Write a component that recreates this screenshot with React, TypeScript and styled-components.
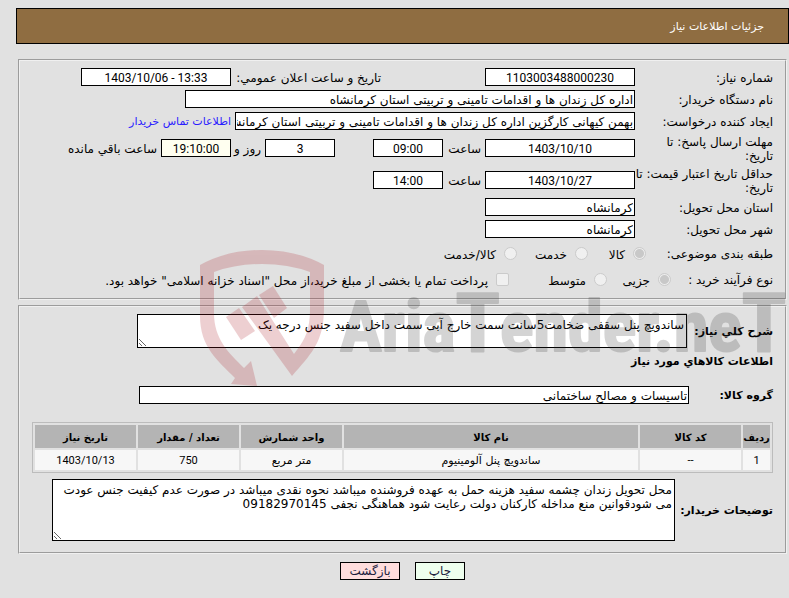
import React from "react";
import styled, { createGlobalStyle } from "styled-components";

const textFont = '"DejaVu Sans", "Noto Sans", sans-serif';
const numberFont = 'Roboto, "DejaVu Sans", sans-serif';

const GlobalStyle = createGlobalStyle`
  * { box-sizing: border-box; }
  body {
    margin: 0;
    background: #e1e1e1;
    color: #000;
    font-family: ${textFont};
    font-size: 12px;
    line-height: 14px;
  }
`;

const Page = styled.main`
  position: relative;
  direction: rtl;
  padding: 8px 0 16px 16px;
  overflow: hidden;
`;

const TitleBar = styled.header`
  display: flex;
  align-items: center;
  height: 36px;
  margin-bottom: 15px;
  padding: 2px 24px 0;
  border: 1px solid #000;
  background: #8f6d41;
`;

const Title = styled.h1`
  margin: 0;
  color: #fff;
  font-size: 11px;
  font-weight: 400;
`;

const Panel = styled.section<{ $top: number; $bottom: number }>`
  margin: 0 2px 5px;
  padding: ${(p) => p.$top}px 12px ${(p) => p.$bottom}px;
  border: 2px groove #f0f0f0;
`;

const Row = styled.div<{ $height?: number }>`
  display: flex;
  align-items: center;
  min-height: ${(p) => p.$height ?? 22}px;
`;

const Label = styled.label<{ $width?: number; $indent?: number; $bold?: boolean }>`
  flex: none;
  width: ${(p) => p.$width ?? 138}px;
  margin-right: ${(p) => p.$indent ?? 0}px;
  padding-top: 2px;
  font-size: ${(p) => (p.$bold ? 11 : 12)}px;
  font-weight: ${(p) => (p.$bold ? 700 : 400)};
`;

const Caption = styled.span<{ $width: number }>`
  flex: none;
  width: ${(p) => p.$width}px;
  padding: 2px 4px 0 0;
  white-space: nowrap;
`;

const TextBox = styled.input<{ $width: number; $number?: boolean; $tint?: boolean; $indent?: number }>`
  flex: 0 1 ${(p) => p.$width}px;
  width: ${(p) => p.$width}px;
  min-width: 0;
  height: 18px;
  margin: 0 ${(p) => p.$indent ?? 0}px 0 0;
  padding: 1px 1px 0;
  border: 1px solid #000;
  border-radius: 0;
  background: ${(p) => (p.$tint ? "#fffff0" : "#fff")};
  color: #000;
  font-family: ${(p) => (p.$number ? numberFont : textFont)};
  font-size: 12px;
  text-align: ${(p) => (p.$number ? "center" : "right")};
  direction: ${(p) => (p.$number ? "ltr" : "rtl")};
`;

const NoteBox = styled.textarea<{ $width: number; $height: number }>`
  flex: 0 1 ${(p) => p.$width}px;
  min-width: 0;
  height: ${(p) => p.$height}px;
  margin: 0;
  padding: 3px 2px;
  border: 1px solid #000;
  border-radius: 0;
  background: #fff;
  color: #000;
  font-family: ${textFont};
  font-size: 12px;
  line-height: 14px;
  overflow: hidden;
`;

const ContactLink = styled.a`
  padding: 2px 4px 0 0;
  color: #2a1cff;
  font-size: 11px;
  text-decoration: none;
  white-space: nowrap;
`;

const Legend = styled.span<{ $width: number }>`
  flex: none;
  width: ${(p) => p.$width}px;
  padding-top: 1px;
`;

const Option = styled.label<{ $width?: number }>`
  display: flex;
  flex: none;
  align-items: center;
  gap: 8px;
  width: ${(p) => (p.$width ? `${p.$width}px` : "auto")};
  white-space: nowrap;
`;

const OptionText = styled.span`
  padding-top: 4px;
`;

const Radio = styled.input`
  appearance: none;
  flex: none;
  width: 13px;
  height: 13px;
  margin: 0;
  border: 1px solid #cbcbcb;
  border-radius: 50%;
  background: #f0f0f0;
  &:checked {
    background: radial-gradient(circle, #c8c8c8 4px, #ececec 5px);
  }
`;

const Check = styled.input`
  appearance: none;
  flex: none;
  width: 13px;
  height: 13px;
  margin: 0;
  border: 1px solid #cbcbcb;
  border-radius: 2px;
  background: #f0f0f0;
`;

const SectionHeading = styled.h2`
  margin: 0 0 10px;
  padding-top: 7px;
  height: 28px;
  font-size: 11px;
  font-weight: 700;
`;

const GoodsTable = styled.table`
  width: 100%;
  margin: 18px 0 6px;
  border: 1px solid #bcbcbc;
  border-collapse: separate;
  border-spacing: 2px;
  table-layout: fixed;
  font-size: 11px;
`;

const HeadCell = styled.th<{ $width?: number }>`
  width: ${(p) => (p.$width ? `${p.$width}px` : "auto")};
  height: 23px;
  padding: 2px 0 0;
  background: #b4b4b4;
  font-size: 10px;
  font-weight: 700;
  white-space: nowrap;
`;

const Cell = styled.td<{ $number?: boolean }>`
  height: 20px;
  padding: 2px 0 0;
  background: #f7f7f7;
  font-family: ${(p) => (p.$number ? numberFont : textFont)};
  text-align: center;
`;

const Actions = styled.footer`
  display: flex;
  justify-content: center;
  gap: 15px;
  margin-top: 8px;
`;

const ActionButton = styled.button<{ $width: number; $fill: string }>`
  width: ${(p) => p.$width}px;
  height: 18px;
  padding: 1px 0 0;
  border: 1px solid #000;
  border-radius: 0;
  background: ${(p) => p.$fill};
  color: #1c1c3c;
  font-family: ${textFont};
  font-size: 12px;
  line-height: 15px;
`;

const Watermark = styled.svg`
  position: absolute;
  top: 248px;
  left: 200px;
  width: 589px;
  height: 140px;
  overflow: visible;
  pointer-events: none;
  direction: ltr;
`;

const WatermarkName = styled.text`
  font-family: "Roboto Condensed", "Liberation Sans Narrow", Roboto, sans-serif;
  font-size: 70px;
  font-weight: 700;
`;

function BrandMark() {
  return (
    <Watermark viewBox="0 0 589 140" aria-hidden="true">
      <g fill="#aa141e" opacity="0.2">
        <path d="M0 17 Q27 2 62 2 Q97 2 124 17 V59 C124 93 113 104 92 128 L42 59 L57 48 L94 106 C104 93 110 84 110 61 V24 Q88 16 62 16 Q36 16 14 24 V65 C14 91 28 104 44 120 L51 113 L57 138 L31 136 L35 130 C18 113 0 99 0 68 Z" />
        <path d="M26 69 L39 60 L55 83 L41 92 Z" />
        <path d="M59 47 L73 38 L87 60 L74 70 Z" />
      </g>
      <WatermarkName x="140" y="103" fill="#2d2d2d" stroke="#2d2d2d" strokeWidth="2" strokeLinejoin="round" opacity="0.2">
        Aria<tspan fontSize="82">T</tspan>ender.ne<tspan fontSize="82">T</tspan>
      </WatermarkName>
    </Watermark>
  );
}

export default function App() {
  return (
    <Page lang="fa">
      <GlobalStyle />
      <TitleBar>
        <Title>جزئیات اطلاعات نیاز</Title>
      </TitleBar>

      <Panel $top={5} $bottom={6}>
        <Row>
          <Label htmlFor="number">شماره نیاز:</Label>
          <TextBox id="number" $width={150} $number readOnly value="1103003488000230" />
          <Label htmlFor="announced" $width={150} $indent={104}>تاریخ و ساعت اعلان عمومي:</Label>
          <TextBox id="announced" $width={150} $number readOnly value="1403/10/06 - 13:33" />
        </Row>
        <Row>
          <Label htmlFor="agency">نام دستگاه خریدار:</Label>
          <TextBox id="agency" $width={450} readOnly value="اداره کل زندان ها و اقدامات تامینی و تربیتی استان کرمانشاه" />
        </Row>
        <Row>
          <Label htmlFor="creator">ایجاد کننده درخواست:</Label>
          <TextBox id="creator" $width={400} readOnly value="بهمن کیهانی کارگزین اداره کل زندان ها و اقدامات تامینی و تربیتی استان کرمانشاه" />
          <ContactLink href="#contact">اطلاعات تماس خریدار</ContactLink>
        </Row>
        <Row $height={32}>
          <Label htmlFor="deadline">مهلت ارسال پاسخ: تا<br />تاریخ:</Label>
          <TextBox id="deadline" $width={150} $number readOnly value="1403/10/10" />
          <Caption $width={42}>ساعت</Caption>
          <TextBox aria-label="ساعت پاسخ" $width={70} $number readOnly value="09:00" />
          <TextBox aria-label="روز" $width={70} $indent={38} $number readOnly value="3" />
          <Caption $width={34}>روز و</Caption>
          <TextBox aria-label="ساعت" $width={70} $number $tint readOnly value="19:10:00" />
          <Caption $width={96}>ساعت باقي مانده</Caption>
        </Row>
        <Row $height={32}>
          <Label htmlFor="validity">حداقل تاریخ اعتبار قیمت: تا<br />تاریخ:</Label>
          <TextBox id="validity" $width={150} $number readOnly value="1403/10/27" />
          <Caption $width={42}>ساعت</Caption>
          <TextBox aria-label="ساعت اعتبار" $width={70} $number readOnly value="14:00" />
        </Row>
        <Row>
          <Label htmlFor="province">استان محل تحویل:</Label>
          <TextBox id="province" $width={150} readOnly value="کرمانشاه" />
        </Row>
        <Row>
          <Label htmlFor="city">شهر محل تحویل:</Label>
          <TextBox id="city" $width={150} readOnly value="کرمانشاه" />
        </Row>
        <Row $height={26} role="radiogroup" aria-labelledby="subject">
          <Legend id="subject" $width={127}>طبقه بندی موضوعی:</Legend>
          <Option $width={58}><Radio type="radio" name="subject" disabled defaultChecked /><OptionText>کالا</OptionText></Option>
          <Option $width={71}><Radio type="radio" name="subject" disabled /><OptionText>خدمت</OptionText></Option>
          <Option><Radio type="radio" name="subject" disabled /><OptionText>کالا/خدمت</OptionText></Option>
        </Row>
        <Row $height={26} role="radiogroup" aria-labelledby="process">
          <Legend id="process" $width={102}>نوع فرآیند خرید :</Legend>
          <Option $width={64}><Radio type="radio" name="process" disabled defaultChecked /><OptionText>جزیی</OptionText></Option>
          <Option $width={98}><Radio type="radio" name="process" disabled /><OptionText>متوسط</OptionText></Option>
          <Option><Check type="checkbox" disabled /><OptionText>پرداخت تمام یا بخشی از مبلغ خرید،از محل "اسناد خزانه اسلامی" خواهد بود.</OptionText></Option>
        </Row>
      </Panel>

      <Panel $top={7} $bottom={11}>
        <Row>
          <Label htmlFor="summary" $width={86} $bold>شرح کلي نیاز:</Label>
          <NoteBox id="summary" $width={550} $height={34} readOnly value="ساندویچ پنل سقفی ضخامت5سانت سمت خارج آبی سمت داخل سفید جنس درجه یک" />
        </Row>
        <SectionHeading>اطلاعات کالاهاي مورد نیاز</SectionHeading>
        <Row $height={18}>
          <Label htmlFor="group" $width={84} $bold>گروه کالا:</Label>
          <TextBox id="group" $width={550} readOnly value="تاسیسات و مصالح ساختمانی" />
        </Row>
        <GoodsTable>
          <thead>
            <tr>
              <HeadCell $width={27}>ردیف</HeadCell>
              <HeadCell $width={101}>کد کالا</HeadCell>
              <HeadCell>نام کالا</HeadCell>
              <HeadCell $width={101}>واحد شمارش</HeadCell>
              <HeadCell $width={101}>تعداد / مقدار</HeadCell>
              <HeadCell $width={101}>تاریخ نیاز</HeadCell>
            </tr>
          </thead>
          <tbody>
            <tr>
              <Cell $number>1</Cell>
              <Cell $number>--</Cell>
              <Cell>ساندویچ پنل آلومینیوم</Cell>
              <Cell>متر مربع</Cell>
              <Cell $number>750</Cell>
              <Cell $number>1403/10/13</Cell>
            </tr>
          </tbody>
        </GoodsTable>
        <Row>
          <Label htmlFor="notes" $width={98} $bold>توضیحات خریدار:</Label>
          <NoteBox
            id="notes"
            $width={623}
            $height={62}
            readOnly
            value="محل تحویل زندان چشمه سفید هزینه حمل به عهده فروشنده میباشد نحوه نقدی میباشد در صورت عدم کیفیت جنس عودت می شودقوانین منع مداخله کارکنان دولت رعایت شود هماهنگی نجفی 09182970145"
          />
        </Row>
      </Panel>

      <Actions>
        <ActionButton type="button" $width={50} $fill="#eeffee">چاپ</ActionButton>
        <ActionButton type="button" $width={60} $fill="#ffdddd">بازگشت</ActionButton>
      </Actions>

      <BrandMark />
    </Page>
  );
}
